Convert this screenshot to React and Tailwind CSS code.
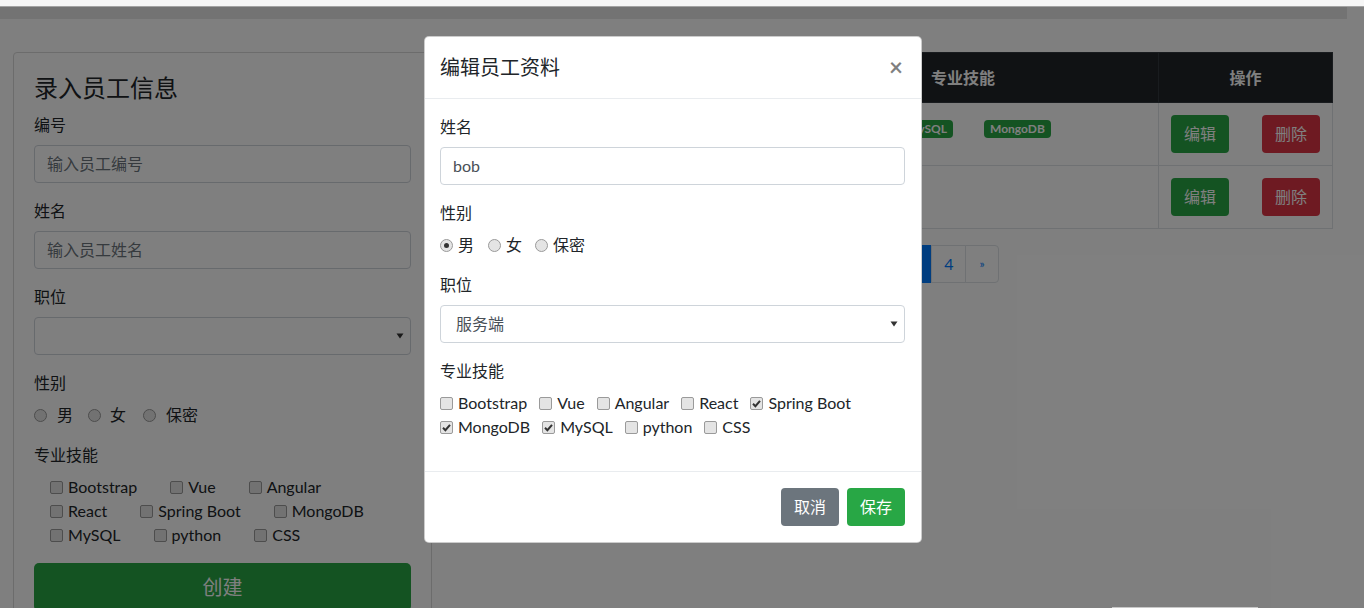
import React from "react";

function Radio({ checked }) {
  return (
    <span className="inline-flex items-center justify-center w-[13px] h-[13px] rounded-full border border-[#9a9a9a] bg-[#e4e4e4] shrink-0">
      {checked && <span className="w-[5px] h-[5px] rounded-full bg-[#333333]" />}
    </span>
  );
}

function Check({ checked }) {
  return (
    <span className="inline-flex items-center justify-center w-[13px] h-[13px] rounded-[2px] border border-[#9a9a9a] bg-[#e4e4e4] shrink-0">
      {checked && (
        <svg width="11" height="11" viewBox="0 0 11 11">
          <path d="M2 5.8 L4.4 8.2 L9 2.8" fill="none" stroke="#333333" strokeWidth="2" />
        </svg>
      )}
    </span>
  );
}

function Arrow() {
  return (
    <svg width="8" height="6" viewBox="0 0 8 6">
      <path d="M0.5 0.5 H7.5 L4 5.5 Z" fill="#333333" />
    </svg>
  );
}

const leftSkills = [
  ["Bootstrap", "Vue", "Angular"],
  ["React", "Spring Boot", "MongoDB"],
  ["MySQL", "python", "CSS"],
];

const modalSkills = [
  ["Bootstrap", false],
  ["Vue", false],
  ["Angular", false],
  ["React", false],
  ["Spring Boot", true],
  ["MongoDB", true],
  ["MySQL", true],
  ["python", false],
  ["CSS", false],
];

export default function App() {
  return (
    <div className="relative w-[1364px] h-[608px] overflow-hidden bg-white text-[#212529] text-[16px] leading-6 font-['Lato','Noto_Sans_CJK_SC',sans-serif]">
      {/* top strip */}
      <div className="h-[6px] bg-[#f6f6f6]" />
      <div className="h-px bg-[#a3a3a3]" />
      <div className="h-[12px] w-[1347px] bg-[#e6e6e6]" />

      {/* page */}
      <div className="flex pl-[13px] pt-[33px] gap-[32px]">
        {/* left card */}
        <div className="w-[419px] shrink-0 border border-[#d8d8d8] rounded-[4px] p-5 h-[600px]">
          <h3 className="text-[24px] leading-[29px] mb-[11px] font-normal">录入员工信息</h3>
          <div className="mb-4">
            <div className="mb-2">编号</div>
            <div className="h-[38px] border border-[#ced4da] rounded-[4px] px-3 flex items-center text-[#6c757d]">输入员工编号</div>
          </div>
          <div className="mb-4">
            <div className="mb-2">姓名</div>
            <div className="h-[38px] border border-[#ced4da] rounded-[4px] px-3 flex items-center text-[#6c757d]">输入员工姓名</div>
          </div>
          <div className="mb-4">
            <div className="mb-2">职位</div>
            <div className="h-[38px] border border-[#ced4da] rounded-[4px] pr-[6px] flex items-center justify-end">
              <Arrow />
            </div>
          </div>
          <div className="mb-4">
            <div className="mb-2">性别</div>
            <div className="flex items-center h-6">
              <Radio />
              <span className="ml-[10px] mr-[15px]">男</span>
              <Radio />
              <span className="ml-[9px] mr-[17px]">女</span>
              <Radio />
              <span className="ml-[10px]">保密</span>
            </div>
          </div>
          <div className="mb-4">
            <div className="mb-2">专业技能</div>
            <div className="pl-4">
              {leftSkills.map((row, i) => (
                <div key={i} className="flex items-center h-6">
                  {row.map((s) => (
                    <span key={s} className="flex items-center mr-[33px]">
                      <Check />
                      <span className="ml-[5px]">{s}</span>
                    </span>
                  ))}
                </div>
              ))}
            </div>
          </div>
          <div className="h-[48px] rounded-[5px] bg-[#28a745] text-white text-[20px] flex items-center justify-center">创建</div>
        </div>

        {/* right column */}
        <div className="w-[868px] shrink-0">
          <table className="w-full table-fixed border-collapse">
            <colgroup>
              <col className="w-[90px]" />
              <col className="w-[120px]" />
              <col className="w-[90px]" />
              <col className="w-[154px]" />
              <col className="w-[240px]" />
              <col className="w-[174px]" />
            </colgroup>
            <thead>
              <tr className="bg-[#212529] text-white h-[50px]">
                {["编号", "姓名", "性别", "职位", "专业技能"].map((h) => (
                  <th key={h} className="text-left font-bold px-3 border border-[#32383e]">{h}</th>
                ))}
                <th className="text-center font-bold px-3 border border-[#32383e]">操作</th>
              </tr>
            </thead>
            <tbody>
              {[
                ["1", "bob", "男", "服务端", ["MySQL", "MongoDB"]],
                ["2", "alice", "女", "前端", []],
              ].map((r) => (
                <tr key={r[0]} className="h-[63px]">
                  <td className="px-3 py-3 align-top border border-[#dee2e6]">{r[0]}</td>
                  <td className="px-3 py-3 align-top border border-[#dee2e6]">{r[1]}</td>
                  <td className="px-3 py-3 align-top border border-[#dee2e6]">{r[2]}</td>
                  <td className="px-3 py-3 align-top border border-[#dee2e6]">{r[3]}</td>
                  <td className="px-3 py-3 align-top border border-[#dee2e6]">
                    <div className="flex gap-[31px] -ml-[30px] pt-[5px]">
                      {r[4].map((b) => (
                        <span key={b} className="bg-[#28a745] text-white text-[12px] font-bold leading-[18px] px-[6px] rounded-[4px]">{b}</span>
                      ))}
                    </div>
                  </td>
                  <td className="px-3 py-3 align-top border border-[#dee2e6]">
                    <div className="flex justify-between">
                      <span className="h-[38px] px-[13px] rounded-[4px] bg-[#28a745] text-white flex items-center">编辑</span>
                      <span className="h-[38px] px-[13px] rounded-[4px] bg-[#dc3545] text-white flex items-center">删除</span>
                    </div>
                  </td>
                </tr>
              ))}
            </tbody>
          </table>
          <div className="flex justify-center mt-4">
            {["«", "1", "2", "3", "4", "»"].map((p, i) => (
              <span
                key={p}
                className={
                  "h-[38px] px-3 flex items-center leading-5 border -ml-px " +
                  (p === "3"
                    ? "bg-[#007bff] border-[#007bff] text-white"
                    : "border-[#dee2e6] text-[#007bff] bg-white") +
                  (i === 0 ? " rounded-l-[4px]" : "") +
                  (i === 5 ? " rounded-r-[4px] text-[12px] px-[13px]" : "")
                }
              >
                {p}
              </span>
            ))}
          </div>
        </div>
      </div>

      {/* overlay */}
      <div className="absolute inset-x-0 top-[7px] bottom-0 bg-black/50" />
      <div className="absolute left-[1112px] bottom-0 w-[146px] h-px bg-[#c8c8c8]" />

      {/* modal */}
      <div className="absolute left-[424px] top-[36px] w-[498px] bg-white rounded-[5px] border border-black/20">
        <div className="flex items-center justify-between pl-[15px] pr-4 pt-[15px] pb-4 border-b border-[#e9ecef]">
          <div className="text-[20px] leading-[30px]">编辑员工资料</div>
          <span className="text-[24px] leading-none font-bold text-black/50 mr-[2px]">×</span>
        </div>
        <div className="py-4 pl-[15px] pr-4">
          <div className="mb-4">
            <div className="mb-2">姓名</div>
            <div className="h-[38px] border border-[#ced4da] rounded-[4px] px-3 flex items-center text-[#495057]">bob</div>
          </div>
          <div className="mb-4">
            <div className="mb-2">性别</div>
            <div className="flex items-center h-6">
              <Radio checked />
              <span className="ml-[5px] mr-[14px]">男</span>
              <Radio />
              <span className="ml-[5px] mr-[13px]">女</span>
              <Radio />
              <span className="ml-[5px]">保密</span>
            </div>
          </div>
          <div className="mb-4">
            <div className="mb-2">职位</div>
            <div className="h-[38px] border border-[#ced4da] rounded-[4px] pl-[15px] pr-[6px] flex items-center justify-between text-[#495057]">
              <span>服务端</span>
              <Arrow />
            </div>
          </div>
          <div className="mb-4">
            <div className="mb-2">专业技能</div>
            <div className="flex flex-wrap">
              {modalSkills.map(([s, c]) => (
                <span key={s} className="flex items-center h-6 mr-[12px]">
                  <Check checked={c} />
                  <span className="ml-[5px]">{s}</span>
                </span>
              ))}
            </div>
          </div>
        </div>
        <div className="flex justify-end gap-2 p-4 border-t border-[#e9ecef]">
          <span className="h-[38px] px-[13px] rounded-[4px] bg-[#6c757d] text-white flex items-center">取消</span>
          <span className="h-[38px] px-[13px] rounded-[4px] bg-[#28a745] text-white flex items-center">保存</span>
        </div>
      </div>
    </div>
  );
}
